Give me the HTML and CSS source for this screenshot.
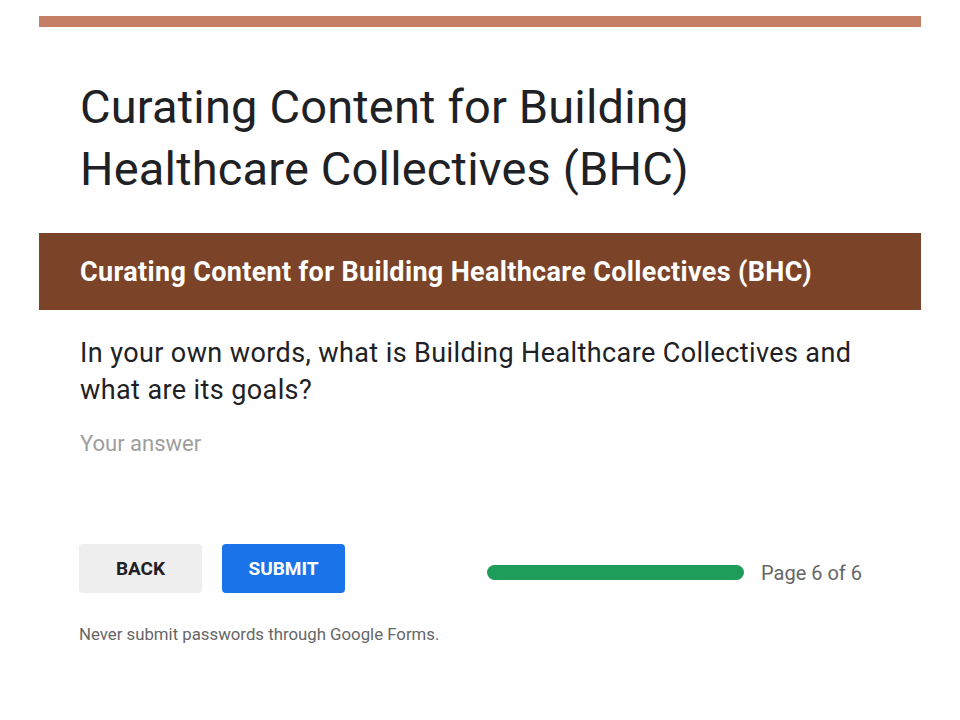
FILE: index.html
```html
<!DOCTYPE html>
<html>
<head>
<meta charset="utf-8">
<link rel="stylesheet" href="styles.css">
</head>
<body>
<div class="page">
  <div class="topbar"></div>
  <h1 class="title">Curating Content for Building Healthcare Collectives (BHC)</h1>
  <div class="section-header">Curating Content for Building Healthcare Collectives (BHC)</div>
  <div class="question">
    <div class="q-text">In your own words, what is Building Healthcare Collectives and what are its goals?</div>
    <div class="answer">Your answer</div>
  </div>
  <div class="nav">
    <div class="buttons">
      <button class="btn btn-back">BACK</button>
      <button class="btn btn-submit">SUBMIT</button>
    </div>
    <div class="progress">
      <div class="bar"></div>
      <span class="page-label">Page 6 of 6</span>
    </div>
  </div>
  <div class="footer">Never submit passwords through Google Forms.</div>
</div>
</body>
</html>
```
FILE: styles.css
```css
html, body {
  margin: 0;
  padding: 0;
  background: #ffffff;
  font-family: Roboto, "Liberation Sans", Arial, sans-serif;
}
.page {
  width: 882px;
  margin-left: 39px;
  padding-top: 16px;
}
.topbar {
  height: 11px;
  background: #c47f64;
}
.title {
  margin: 49px 0 0 0;
  padding: 0 80px 0 41px;
  font-weight: 400;
  font-size: 47px;
  letter-spacing: 0.17px;
  line-height: 62px;
  color: #202124;
}
.section-header {
  margin-top: 33px;
  height: 77px;
  background: #7b4428;
  color: #ffffff;
  font-weight: 700;
  font-size: 27px;
  letter-spacing: 0.33px;
  display: flex;
  align-items: center;
  padding-left: 41px;
}
.question {
  padding: 25px 41px 0 41px;
}
.q-text {
  font-size: 27px;
  letter-spacing: 0.4px;
  line-height: 37px;
  color: #202124;
  padding-right: 0;
}
.answer {
  margin-top: 21px;
  font-size: 22px;
  line-height: 28px;
  color: #9e9e9e;
}
.nav {
  margin-top: 86px;
  padding: 0 59px 0 40px;
  display: flex;
  align-items: center;
  justify-content: space-between;
}
.buttons {
  display: flex;
  gap: 20px;
}
.btn {
  width: 123px;
  height: 49px;
  border: none;
  border-radius: 4px;
  font-family: Roboto, "Liberation Sans", Arial, sans-serif;
  font-weight: 700;
  font-size: 19px;
  letter-spacing: 0;
  padding: 0;
}
.btn-back {
  background: #eeeeee;
  color: #202124;
}
.btn-submit {
  background: #1a73e8;
  color: #ffffff;
}
.progress {
  display: flex;
  align-items: center;
  gap: 17px;
  padding-top: 8px;
}
.bar {
  width: 257px;
  height: 15px;
  border-radius: 8px;
  background: #1e9c5a;
}
.page-label {
  font-size: 20px;
  color: #666666;
}
.footer {
  margin-top: 31px;
  padding-left: 40px;
  font-size: 16.8px;
  color: #666666;
}
```
